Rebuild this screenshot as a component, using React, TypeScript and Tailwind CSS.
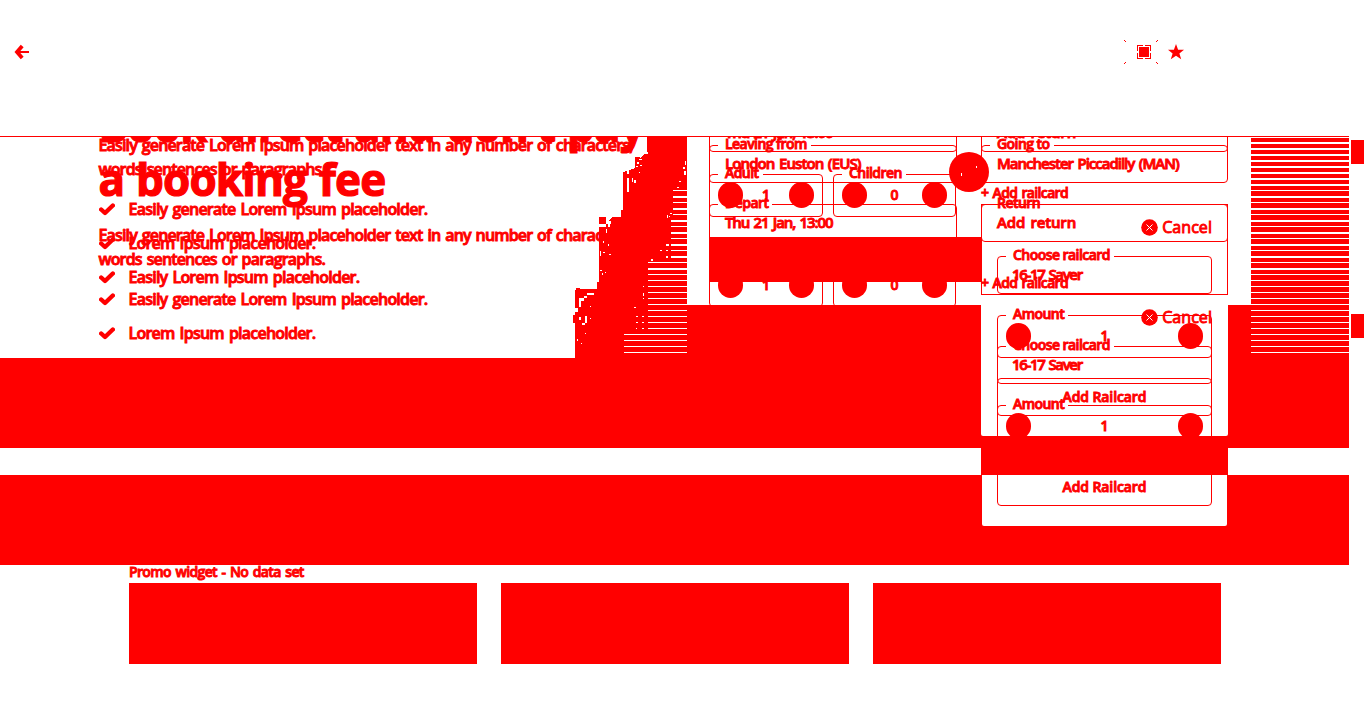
import React from "react";

const RED = "#ff0000";

type Gap = { y: number; h: number };

const gaps: Gap[] = [];
for (let k = 0; k < 37; k++) {
  gaps.push({ y: 136 + 6 * k, h: k < 9 || (k < 24 && k % 2 === 0) ? 2 : 1 });
}

function Check() {
  return (
    <svg className="h-[14px] w-[16px] shrink-0" viewBox="0 0 16 14">
      <path d="M2.2 7.5 L6 11 L13.8 3.5" fill="none" stroke={RED} strokeWidth="4.4" strokeLinecap="round" strokeLinejoin="round" />
    </svg>
  );
}

function HeroCopy() {
  const items = ["Easily generate Lorem Ipsum placeholder.", "Lorem Ipsum placeholder.", "Easily Lorem Ipsum placeholder."];
  return (
    <div className="w-[560px] whitespace-nowrap">
      <h1 className="-mt-px text-[44px] font-bold leading-[54px] tracking-[-0.8px] [-webkit-text-stroke:1.2px_#ff0000] [word-spacing:1px]">
        Book direct and don’t pay
        <br />a booking fee
      </h1>
      <p className="mt-[17px] text-[16px] leading-[24px] tracking-[-0.85px] [word-spacing:1.6px]">
        Easily generate Lorem Ipsum placeholder text in any number of characters,
        <br />
        words sentences or paragraphs.
      </p>
      <ul className="mt-[11px] flex flex-col">
        {items.map((item) => (
          <li key={item} className="flex h-[34px] items-center gap-[14px] text-[16px] tracking-[-0.77px] [word-spacing:1.7px]">
            <Check />
            <span>{item}</span>
          </li>
        ))}
      </ul>
    </div>
  );
}

type FieldProps = { label: string; value?: string; className: string; valueClass?: string; children?: React.ReactNode };

function Field({ label, value, className, valueClass = "tracking-[-0.7px]", children }: FieldProps) {
  return (
    <fieldset className={"min-w-0 rounded-[4px] border border-[#ff0000] " + className}>
      <legend className="ml-[8px] h-[17px] pl-[7px] pr-[4px] text-[14px] leading-[13px] tracking-[-0.55px]">{label}</legend>
      {value && <div className={"-mt-px pl-[15px] text-[15px] leading-[20px] " + valueClass}>{value}</div>}
      {children}
    </fieldset>
  );
}

function Stepper({ value }: { value: string }) {
  return (
    <div className="-mt-px flex h-[26px] items-center justify-between px-[8px] text-[14px]">
      <span className="h-[26px] w-[25px] rounded-full bg-[#ff0000]" />
      <span className="-mt-px">{value}</span>
      <span className="h-[26px] w-[25px] rounded-full bg-[#ff0000]" />
    </div>
  );
}

function JourneyForm() {
  return (
    <div className="flex w-[519px] flex-col whitespace-nowrap">
      <div className="flex gap-[24px]">
        <Field label="Leaving from" value="London Euston (EUS)" className="h-[46px] w-[248px]" valueClass="tracking-[-0.9px] [word-spacing:1.5px]" />
        <Field label="Going to" value="Manchester Piccadilly (MAN)" className="h-[46px] w-[247px]" valueClass="tracking-[-1px] [word-spacing:1.5px]" />
      </div>
      <div className="mt-[13px] flex gap-[24px]">
        <Field label="Depart" value="Thu 21 Jan, 13:00" className="h-[46px] w-[248px]" valueClass="tracking-[-1.1px] [word-spacing:1.5px]" />
        <Field label="Return" value="Add return" className="h-[46px] w-[247px]" valueClass="tracking-[-0.15px] [word-spacing:1.5px]" />
      </div>
      <div className="mt-[14px] flex">
        <Field label="Adult" className="h-[51px] w-[114px]">
          <Stepper value="1" />
        </Field>
        <Field label="Children" className="ml-[10px] h-[51px] w-[123px]">
          <Stepper value="0" />
        </Field>
        <div className="ml-[25px] mt-[17px] text-[14px] leading-[20px] tracking-[-0.65px] [word-spacing:1.2px]">+ Add railcard</div>
      </div>
    </div>
  );
}

function RailcardPanel() {
  return (
    <div className="flex h-[232px] w-[247px] flex-col whitespace-nowrap px-[16px] pt-[11px]">
      <div className="flex h-[24px] items-center justify-end gap-[4px] text-[16px] tracking-[0.05px]">
        <svg className="h-[17px] w-[17px]" viewBox="0 0 17 17">
          <circle cx="8.5" cy="8.5" r="8.3" fill={RED} />
          <path d="M5.5 5.5l6 6m0-6l-6 6" stroke="#fff" strokeWidth="1" />
        </svg>
        <span className="font-medium">Cancel</span>
      </div>
      <Field label="Choose railcard" value="16-17 Saver" className="mt-[9px] h-[46px] w-[215px] shrink-0" valueClass="-ml-px tracking-[-1.35px] [word-spacing:1.5px]" />
      <Field label="Amount" className="mt-[13px] h-[51px] w-[215px] shrink-0">
        <Stepper value="1" />
      </Field>
      <div className="mt-[20px] flex h-[38px] w-[215px] shrink-0 items-center justify-center rounded-[4px] border border-[#ff0000] pb-[2px] text-[14px] tracking-[-0.1px]">
        Add Railcard
      </div>
    </div>
  );
}

function TornPhoto() {
  const specks: [number, number, number, number][] = [
    [685, 161, 1, 4], [683, 167, 2, 2], [684, 171, 2, 4], [679, 181, 2, 1], [677, 187, 2, 1],
    [603, 241, 1, 2], [600, 251, 1, 5], [603, 252, 2, 1], [609, 254, 2, 1], [600, 270, 2, 1], [602, 273, 1, 2], [605, 272, 1, 1],
    [608, 244, 1, 2], [668, 244, 1, 2], [666, 244, 2, 2], [660, 250, 2, 1], [666, 250, 2, 1], [666, 256, 2, 2], [651, 259, 2, 2], [643, 286, 1, 1], [643, 293, 1, 3],
    [643, 298, 1, 1], [634, 307, 2, 1], [636, 316, 2, 1], [642, 316, 2, 1], [636, 322, 2, 1], [642, 322, 2, 1], [636, 328, 1, 1], [642, 328, 2, 1],
    [579, 317, 2, 3], [585, 316, 2, 7], [582, 323, 3, 2], [590, 306, 1, 1], [590, 318, 1, 1], [585, 333, 1, 1], [577, 339, 1, 2], [581, 343, 1, 1],
    [627, 178, 2, 14], [632, 178, 1, 4], [634, 180, 2, 3], [639, 172, 1, 1], [637, 162, 2, 2], [639, 159, 3, 1], [636, 166, 2, 1], [640, 165, 2, 1],
    [667, 215, 1, 3], [669, 216, 1, 1], [670, 213, 2, 1], [608, 224, 2, 3], [609, 221, 2, 3], [606, 229, 1, 4],
    [579, 298, 2, 9], [581, 298, 3, 3], [584, 296, 3, 2], [587, 293, 7, 2], [575, 308, 3, 4],
  ];
  return (
    <svg className="relative h-[221px] w-[114px]" viewBox="573 137 114 221" shapeRendering="crispEdges">
      <path
        fill={RED}
        d="M647 137 H687 V358 H575 V323 H573 V315 H575 V290 H576 V288 H580 V289 H597 V282 H599 V227 H606 V224 H609 V220 L612 217 H621 V210 H623 V172 L627 171 V174 H629 V170 L635 168 V157 H640 V158 L644 154 H648 V152 H647 Z M599 217 H606 V224 H599 Z"
      />
      {specks.map(([x, y, w, h], i) => (
        <rect key={i} x={x} y={y} width={w} height={h} fill="#fff" />
      ))}
      {gaps
        .filter((g) => g.y >= 190)
        .map((g) => {
          const x = g.y < 220 ? 673 : g.y < 262 ? 671 : g.y < 334 ? 648 : 624;
          return <rect key={g.y} x={x} y={g.y} width={687 - x} height={g.h} fill="#fff" />;
        })}
    </svg>
  );
}

function Stripes() {
  return (
    <svg className="h-[221px] w-[98px]" viewBox="1251 137 98 221" shapeRendering="crispEdges">
      <rect x="1251" y="137" width="98" height="221" fill={RED} />
      {gaps.map((g) => (
        <rect key={g.y} x="1251" y={g.y} width="98" height={g.h} fill="#fff" />
      ))}
    </svg>
  );
}

function Header() {
  return (
    <header className="flex h-[137px] w-[1349px] items-start border-b border-[#ff0000] pt-[40px]">
      <svg className="ml-[14px] mt-[4px] h-[16px] w-[16px]" viewBox="14 44 16 16">
        <path d="M22.2 46 L17 52 L22.2 58" fill="none" stroke={RED} strokeWidth="3.8" />
        <path d="M17 52 H29" stroke={RED} strokeWidth="2" />
      </svg>
      <svg className="ml-[1094px] h-[24px] w-[34px]" viewBox="1124 40 34 24" shapeRendering="crispEdges">
        <path
          fill={RED}
          d="M1124 40h1v1h-1z M1125 41h1v1h-1z M1157 40h1v1h-1z M1156 41h1v1h-1z M1125 62h1v1h-1z M1124 63h1v1h-1z M1156 62h1v1h-1z M1157 63h1v1h-1z M1139 47h10v10h-10z M1137 45h6v1h-5v5h-1z M1145 45h6v6h-1v-5h-5z M1137 53h1v5h5v1h-6z M1150 53h1v6h-6v-1h5z"
        />
      </svg>
      <svg className="ml-[10px] mt-[4px] h-[16px] w-[16px]" viewBox="0 0 16 16">
        <path d="M8 0l2.1 5.7H16l-4.6 3.8L13.2 15.2 8 11.8 2.8 15.2 4.6 9.5 0 5.7h5.9z" fill={RED} />
      </svg>
    </header>
  );
}

export default function App() {
  return (
    <div className="relative h-[728px] w-[1366px] overflow-hidden bg-white font-['Open_Sans',sans-serif] font-semibold text-[#ff0000] [-webkit-text-stroke:0.9px_#ff0000]">
      <Header />
      <section className="relative flex h-[221px] w-[1349px]">
        <div className="w-[573px]">
          <div className="absolute left-0 top-0 h-[221px] w-[640px] overflow-hidden">
            <div className="absolute left-[98.5px] top-[-128px]">
              <HeroCopy />
            </div>
            <div className="absolute left-[98.5px] top-[-38px]">
              <HeroCopy />
            </div>
          </div>
        </div>
        <TornPhoto />
        <div className="flex h-[221px] w-[564px] flex-col">
          <div className="h-[168px]" />
          <div className="flex-1 bg-[#ff0000]" />
        </div>
        <Stripes />
      </section>
      <div className="h-[90px] w-[1349px] bg-[#ff0000]" />
      <div className="h-[27px]" />
      <div className="h-[90px] w-[1349px] bg-[#ff0000]" />
      <section className="w-[1349px] pl-[129px]">
        <h2 className="h-[18px] text-[14px] leading-[14px] tracking-[-0.65px] [word-spacing:1.6px]">Promo widget - No data set</h2>
        <div className="flex gap-[24px]">
          <div className="h-[81px] w-[348px] bg-[#ff0000]" />
          <div className="h-[81px] w-[348px] bg-[#ff0000]" />
          <div className="h-[81px] w-[348px] bg-[#ff0000]" />
        </div>
      </section>

      <div className="absolute left-[709px] top-[137px] h-[168px] w-[540px] overflow-hidden">
        <div className="absolute left-0 top-[-90px]">
          <JourneyForm />
        </div>
        <div className="absolute left-0 top-0">
          <JourneyForm />
        </div>
        <div className="absolute left-0 top-[100px] h-[45px] w-[273px] bg-[#ff0000]" />
        <div className="absolute left-[240px] top-[15px] h-[40px] w-[40px] rounded-full bg-[#ff0000]">
          <span className="absolute left-[12px] top-[21px] h-[3px] w-px bg-white" />
          <span className="absolute left-[27px] top-[14px] h-[2px] w-px bg-white" />
        </div>
        <div className="absolute left-[272px] top-[67px] h-[91px] w-[247px] border border-[#ff0000]" />
      </div>
      <div className="absolute left-[981px] top-[305px] h-[131px] w-[247px] rounded-b-[2px] bg-white" />
      <div className="absolute left-[982px] top-[475px] h-[51px] w-[245px] rounded-b-[2px] bg-white" />
      <div className="absolute left-[981px] top-[204px]">
        <RailcardPanel />
      </div>
      <div className="absolute left-[981px] top-[294px]">
        <RailcardPanel />
      </div>
      <div className="absolute left-[981px] top-[436px] h-[39px] w-[247px] bg-[#ff0000]" />
      <div className="absolute left-[1351px] top-[140px] h-[24px] w-[13px] bg-[#ff0000]" />
      <div className="absolute left-[1351px] top-[314px] h-[24px] w-[13px] bg-[#ff0000]" />
    </div>
  );
}
